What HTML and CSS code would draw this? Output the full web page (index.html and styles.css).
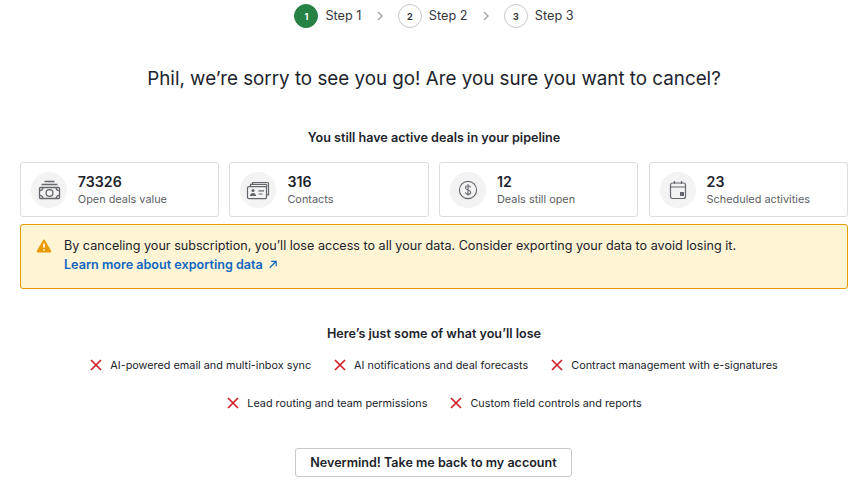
FILE: index.html
```html
<!DOCTYPE html>
<html lang="en">
<head>
    <meta charset="UTF-8">
    <title>Cancel subscription</title>
    <link rel="stylesheet" href="styles.css">
</head>
<body>
    <ol class="steps">
        <li class="step step-active"><span class="step-num">1</span><span class="step-label">Step 1</span></li>
        <li class="step-sep"><svg width="16" height="16" viewBox="0 0 16 16"><path d="M6 4l4 4-4 4" fill="none" stroke="#a3a5aa" stroke-width="1.4"/></svg></li>
        <li class="step"><span class="step-num">2</span><span class="step-label">Step 2</span></li>
        <li class="step-sep"><svg width="16" height="16" viewBox="0 0 16 16"><path d="M6 4l4 4-4 4" fill="none" stroke="#a3a5aa" stroke-width="1.4"/></svg></li>
        <li class="step"><span class="step-num">3</span><span class="step-label">Step 3</span></li>
    </ol>

    <h1 class="title">Phil, we’re sorry to see you go! Are you sure you want to cancel?</h1>

    <h2 class="subtitle pipeline-title">You still have active deals in your pipeline</h2>

    <div class="cards">
        <div class="card">
            <span class="card-icon">
                <svg width="24" height="24" viewBox="0 0 24 24" fill="none" stroke="#65676e" stroke-width="1.300">
                    <path d="M7.500 3.500h10M4.500 6.500h16"/>
                    <rect x="2.500" y="9.500" width="20" height="11" rx="1"/>
                    <circle cx="12.500" cy="15" r="3.400"/>
                    <path d="M2.700 12.700c2 0 3-1 3.200-3M22.300 12.700c-2 0-3-1-3.200-3M2.700 17.300c2 0 3 1 3.200 3M22.300 17.300c-2 0-3 1-3.200 3"/>
                </svg>
            </span>
            <div><div class="card-num">73326</div><div class="card-label">Open deals value</div></div>
        </div>
        <div class="card">
            <span class="card-icon">
                <svg width="24" height="24" viewBox="0 0 24 24" fill="none" stroke="#65676e" stroke-width="1.200">
                    <path d="M6.500 6.200V4.500h15a1 1 0 0 1 1 1v11.300h-1.600"/>
                    <path d="M4.500 8.500V6.300h15.300a1 1 0 0 1 1 1V9"/>
                    <rect x="1.500" y="8.600" width="19" height="12" rx="1.400"/>
                    <circle cx="7" cy="12.600" r="1.500" fill="#65676e" stroke="none"/>
                    <path d="M3.900 18c.2-2 1.400-3 3.100-3s2.900 1 3.100 3z" fill="#65676e" stroke="none"/>
                    <path d="M12.500 12.800h5.500M12.500 16h4"/>
                </svg>
            </span>
            <div><div class="card-num">316</div><div class="card-label">Contacts</div></div>
        </div>
        <div class="card">
            <span class="card-icon">
                <svg width="24" height="24" viewBox="0 0 24 24" fill="none" stroke="#65676e" stroke-width="1.100">
                    <circle cx="12" cy="12" r="8.600"/>
                    <path d="M14.500 9.500c-.3-1.100-1.300-1.800-2.500-1.800-1.400 0-2.500.8-2.500 2 0 2.900 5.200 1.500 5.200 4.500 0 1.300-1.100 2.100-2.700 2.100-1.400 0-2.400-.7-2.700-1.900M12 6.200v11.600"/>
                </svg>
            </span>
            <div><div class="card-num">12</div><div class="card-label">Deals still open</div></div>
        </div>
        <div class="card">
            <span class="card-icon">
                <svg width="24" height="24" viewBox="0 0 24 24" fill="none" stroke="#65676e" stroke-width="1.200">
                    <rect x="4.500" y="5" width="15" height="15.500" rx="2"/>
                    <path d="M4.500 9h15M8.500 3v3M15.500 3v3"/>
                    <rect x="14" y="14" width="4" height="4" fill="#65676e" stroke="none"/>
                </svg>
            </span>
            <div><div class="card-num">23</div><div class="card-label">Scheduled activities</div></div>
        </div>
    </div>

    <div class="alert">
        <svg class="alert-icon" width="16" height="16" viewBox="0 0 16 16">
            <path d="M8 1.500c.4 0 .7.2.9.5l6.300 11c.4.700 0 1.500-.9 1.500H1.700c-.9 0-1.300-.8-.9-1.500l6.300-11c.2-.3.5-.5.900-.5z" fill="#e99a00"/>
            <path d="M8 5.500v4.200" stroke="#fff" stroke-width="1.500"/>
            <circle cx="8" cy="11.800" r=".9" fill="#fff"/>
        </svg>
        <div>
            <p class="alert-text">By canceling your subscription, you’ll lose access to all your data. Consider exporting your data to avoid losing it.</p>
            <a class="alert-link" href="#">Learn more about exporting data <svg width="11" height="11" viewBox="0 0 12 12"><path d="M3 9.500L9.500 3M4.500 2.500h5.500V8" fill="none" stroke="#0d66c2" stroke-width="1.300"/></svg></a>
        </div>
    </div>

    <h2 class="subtitle lose-title">Here’s just some of what you’ll lose</h2>

    <ul class="lose-row lose-row-first">
        <li class="lose-item"><svg width="14" height="14" viewBox="0 0 14 14"><path d="M2 2l10 10M12 2L2 12" stroke="#d0212b" stroke-width="1.700"/></svg>AI-powered email and multi-inbox sync</li>
        <li class="lose-item"><svg width="14" height="14" viewBox="0 0 14 14"><path d="M2 2l10 10M12 2L2 12" stroke="#d0212b" stroke-width="1.700"/></svg>AI notifications and deal forecasts</li>
        <li class="lose-item"><svg width="14" height="14" viewBox="0 0 14 14"><path d="M2 2l10 10M12 2L2 12" stroke="#d0212b" stroke-width="1.700"/></svg>Contract management with e-signatures</li>
    </ul>
    <ul class="lose-row">
        <li class="lose-item"><svg width="14" height="14" viewBox="0 0 14 14"><path d="M2 2l10 10M12 2L2 12" stroke="#d0212b" stroke-width="1.700"/></svg>Lead routing and team permissions</li>
        <li class="lose-item"><svg width="14" height="14" viewBox="0 0 14 14"><path d="M2 2l10 10M12 2L2 12" stroke="#d0212b" stroke-width="1.700"/></svg>Custom field controls and reports</li>
    </ul>

    <div class="actions">
        <button class="back-btn">Nevermind! Take me back to my account</button>
    </div>
</body>
</html>
```

FILE: styles.css
```css
body {
    font-family: Inter, "Liberation Sans", sans-serif;
    margin: 0;
    padding: 4px 17px 0 20px;
    color: #21232c;
    background: #fff;
    overflow: hidden;
}
.steps {
    list-style: none;
    display: flex;
    justify-content: center;
    align-items: center;
    gap: 10.2px;
    margin: 0;
    padding: 0;
    height: 24px;
}
.step {
    display: flex;
    align-items: center;
    gap: 7px;
    font-size: 12.7px;
    color: #34363e;
}
.step-label {
    padding-bottom: 2px;
}
.step-num {
    width: 22px;
    height: 22px;
    border: 1px solid #c6c8cc;
    border-radius: 50%;
    display: flex;
    align-items: center;
    justify-content: center;
    font-size: 9px;
    font-weight: 700;
}
.step-active .step-num {
    background: #268244;
    border-color: #268244;
    color: #fff;
}
.step-sep {
    display: flex;
    width: 16px;
}
.title {
    font-size: 18.8px;
    font-weight: 400;
    line-height: 28px;
    text-align: center;
    margin: 37px 0 0;
}
.subtitle {
    font-size: 12.6px;
    font-weight: 600;
    line-height: 16px;
    text-align: center;
    margin: 0;
}
.pipeline-title {
    margin-top: 37px;
}
.cards {
    display: grid;
    grid-template-columns: repeat(4, 1fr);
    gap: 10.2px;
    margin: 16px 0 0 -0.2px;
}
.card {
    display: flex;
    align-items: center;
    gap: 11px;
    height: 55px;
    box-sizing: border-box;
    padding: 0 10px;
    border: 1px solid #dcdde0;
    border-radius: 3px;
}
.card-icon {
    width: 36px;
    height: 36px;
    border-radius: 50%;
    background: #f3f3f4;
    display: flex;
    align-items: center;
    justify-content: center;
    flex: none;
}
.card-num {
    font-size: 14.2px;
    font-weight: 600;
    line-height: 18px;
}
.card-label {
    font-size: 10.9px;
    line-height: 16px;
    color: #5d5f66;
}
.alert {
    display: flex;
    gap: 12px;
    margin-top: 7px;
    height: 65px;
    box-sizing: border-box;
    padding: 11px 15px;
    background: #fff4d3;
    border: 1px solid #e99a00;
    border-radius: 3px;
}
.alert-icon {
    flex: none;
    margin-top: 2px;
}
.alert-text {
    font-size: 12.6px;
    line-height: 19px;
    margin: 0;
}
.alert-link {
    display: flex;
    align-items: center;
    gap: 4px;
    font-size: 12.6px;
    line-height: 19px;
    font-weight: 600;
    color: #0d66c2;
    text-decoration: none;
}
.lose-title {
    margin-top: 37px;
}
.lose-row {
    list-style: none;
    display: flex;
    justify-content: center;
    gap: 22px;
    margin: 22px 0 0;
    padding: 0;
}
.lose-row-first {
    margin-top: 15px;
    padding-right: 1px;
}
.lose-item {
    display: flex;
    align-items: center;
    gap: 7px;
    font-size: 10.85px;
    line-height: 16px;
}
.actions {
    display: flex;
    justify-content: center;
    margin-top: 37px;
    padding-right: 1px;
}
.back-btn {
    font-family: inherit;
    font-size: 12.55px;
    font-weight: 600;
    color: #21232c;
    width: 277px;
    height: 29px;
    background: #fff;
    border: 1px solid #c6c8cc;
    border-radius: 3px;
}
```
